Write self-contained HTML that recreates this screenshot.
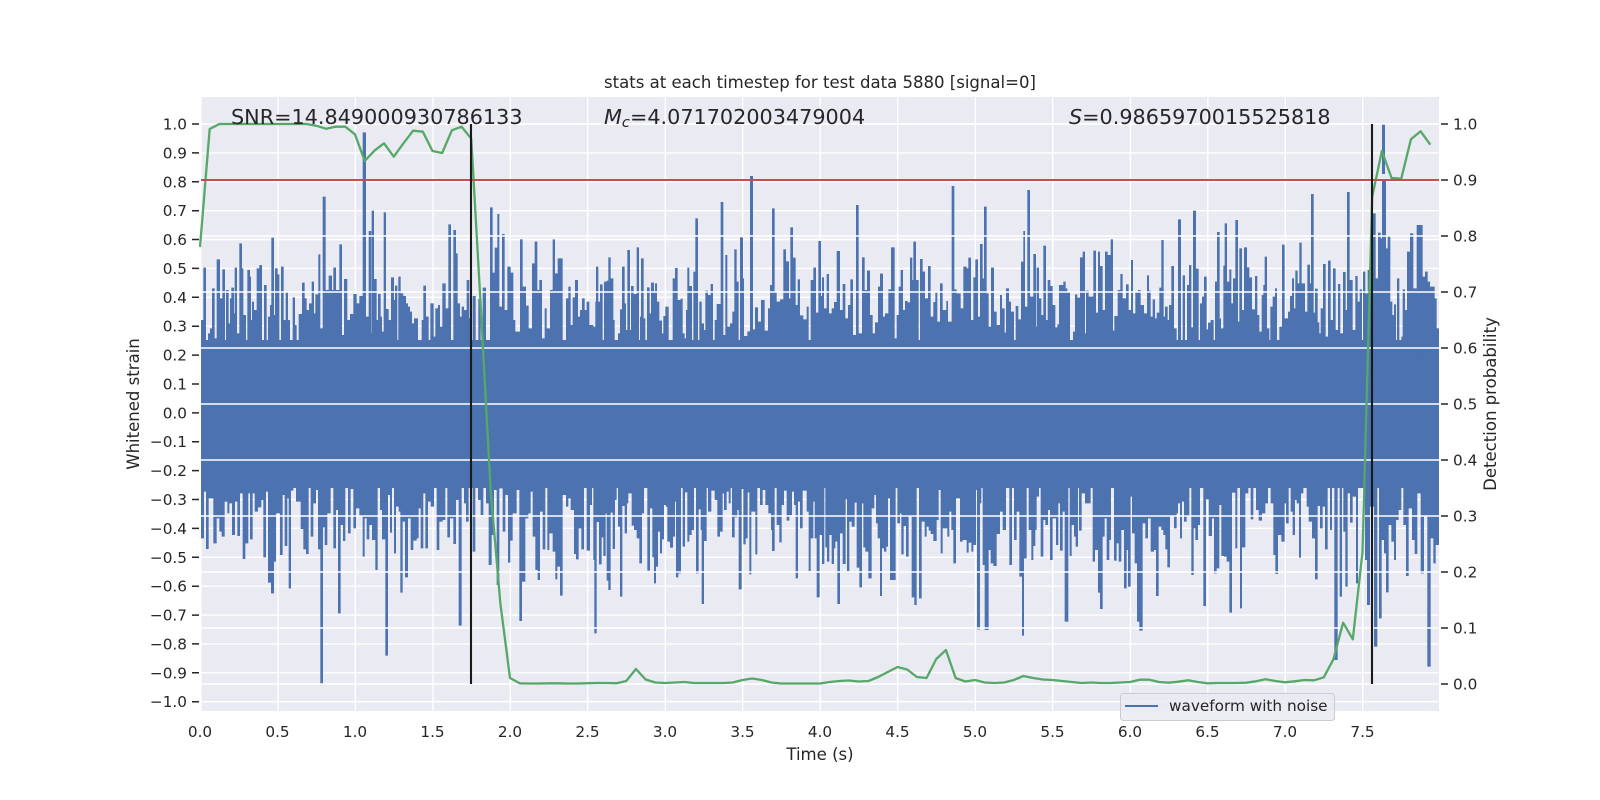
<!DOCTYPE html>
<html><head><meta charset="utf-8"><title>stats</title>
<style>
html,body{margin:0;padding:0;background:#fff}
svg{display:block}
text{font-family:"DejaVu Sans",sans-serif;fill:#262626}
.t{font-size:15.28px}
.l{font-size:16.55px}
.a{font-size:20.75px}
</style></head><body>
<svg width="1600" height="800" viewBox="0 0 1600 800" xmlns="http://www.w3.org/2000/svg">
<defs>
<clipPath id="c"><rect x="201" y="97" width="1238" height="614"/></clipPath>
</defs>
<rect x="201" y="97" width="1238" height="614" fill="#eaeaf2"/>
<!-- grid of the left axis -->
<g clip-path="url(#c)">
<path stroke="#fff" stroke-width="1.4" fill="none" d="M200 124H1440M200 152.9H1440M200 181.8H1440M200 210.7H1440M200 239.5H1440M200 268.4H1440M200 297.3H1440M200 326.2H1440M200 355.1H1440M200 384H1440M200 412.9H1440M200 441.7H1440M200 470.6H1440M200 499.5H1440M200 528.4H1440M200 557.3H1440M200 586.2H1440M200 615.1H1440M200 643.9H1440M200 672.8H1440M200 701.7H1440
M201 96V712M278 96V712M355.3 96V712M433 96V712M510.3 96V712M587.7 96V712M665.2 96V712M742.7 96V712M820.2 96V712M897.7 96V712M975.2 96V712M1052.7 96V712M1130.4 96V712M1207.8 96V712M1285.3 96V712M1362.8 96V712"/>
<!-- waveform -->
<g fill="#4c72b0">
<rect x="201" y="340" width="1238" height="148"/>
<!-- top left -->
<path transform="translate(190 90) scale(.33333)" d="M33 900V690H40V533H48V750H54V730H60V715H66V595H74V745H80V508H90V625H97V538H105V770H108V600H116V700H120V625H124V593H132V670H134V533H141V730H148V460H156V535H160V675H168V810H172V540H180V560H183V690H186V635H192V660H200V535H208V525H216V790H222V585H230V760H234V680H240V645H244V443H252V675H255V535H263V553H268V750H273V530H281V690H287V608H294V690H300V800H308V622H315V705H320V750H326V672H336V578H344V625H350V660H357V640H365V575H372V670H376V613H385V493H391V715H398V320H407V600H416V557H426V600H430V533H438V600H448V463H456V735H462V567H472V690H480V672H490V612H500V640H508V618H518V127H528V680H536V423H544V730H545V362H552V567H560V690H564V612H572V680H576V725H581V367H588V657H596V690H603V562H612V630H615V587H622V810H625V560H632V610H640V618H648V640H654V650H660V665H666V700H672V685H684V775H695V690H700V587H708V680H716V755H721V640H731V740H736V655H744V645H750V710H757V580H767V655H775V403H783V755H790V420H798V490H803V640H810V680H815V650H822V660H830V570H838V685H845V800H848V618H857V755H865V627H872V755H878V593H888V752H900V352H908V548H914V473H922V372H928V650H936V432H944V660H952V530H962V548H970V690H976V725H984V725H990V448H998V590H1008V647H1016V715H1026V520H1034V455H1042V600H1048V570H1056V745H1064V655H1070V715H1080V600H1088V448H1095V550H1103V505H1118V750H1128V625H1135V590H1142V705H1148V622H1155V570H1164V680H1172V900z"/>
<!-- top middle -->
<path transform="translate(580 170) scale(.33333)" d="M0 570V420H6V385H14V420H20V395H28V465H40V470H46V395H48V290H55V395H60V343H68V510H72V335H80V332H85V262H92V325H100V450H104V520H108V510H114V490H120V418H126V290H134V400H138V480H142V240H150V480H153V348H161V372H170V232H177V520H180V440H183V265H191V445H196V550H201V352H209V430H213V338H222V368H225V340H231V395H238V452H246V490H250V438H256V410H266V515H274V510H278V325H285V294H293V390H302V386H308V490H314V505H318V420H322V293H328V348H336V540H340V305H346V145H354V540H358V395H365V460H372V480H376V362H384V375H392V342H399V510H404V450H410V402H422V96H430V495H436V255H442V470H450V460H457V425H463V238H470V335H476V545H480V202H489V325H492V498H502V484H510V18H519V478H525V412H534V455H543V390H554V482H564V415H570V345H576V115H584V365H590V395H600V388H610V238H618V274H627V385H631V172H639V263H647V405H653V328H660V436H670V448H680V410H686V530H692V330H700V293H708V428H715V213H723V378H726V322H732V415H740V312H747V430H755V415H762V396H770V243H780V420H788V342H796V445H804V405H811V328H819V495H828V105H836V490H846V262H854V360H861V302H870V435H878V490H885V457H894V350H900V311H909V440H915V430H925V358H933V232H944V505H950V435H956V350H962V300H969V420H975V393H983V397H990V263H997V330H1000V215H1008V330H1016V530H1020V267H1028V305H1035V385H1044V288H1052V440H1060V396H1066V365H1072V455H1080V340H1088V420H1099V393H1104V455H1115V48H1123V358H1130V370H1142V415H1150V290H1160V295H1165V263H1173V450H1180V322H1186V268H1194V440H1200V222H1208V325H1212V110H1220V370H1226V470H1233V293H1242V425H1250V465H1260V570z"/>
<!-- top right -->
<path transform="translate(1000 170) scale(.33333)" d="M0 570V375H6V415H14V488H18V355H27V395H33V425H42V550H47V408H55V448H63V275H70V183H75V410H82V60H90V380H100V252H108V470H110V293H117V385H124V435H130V227H138V450H143V330H151V348H158V405H166V472H172V463H177V345H190V335H197V355H202V365H210V550H219V485H225V373H232V383H240V262H248V245H255V490H258V362H266V380H280V242H288V428H294V245H300V288H308V420H315V245H323V255H332V208H339V482H343V438H353V360H361V312H368V385H378V343H386V420H393V270H399V430H406V365H414V360H422V405H432V430H441V316H447V362H452V440H458V388H465V445H470V428H478V353H484V210H491V440H495V410H503V450H507V405H514V288H522V475H530V515H534V148H543V525H548V316H555V530H561V345H567V285H574V472H579V122H588V296H596V530H600V400H606V380H612V320H620V478H624V458H632V450H641V530H645V335H651V186H659V445H663V475H670V287H674V160H681V335H688V298H694V400H699V325H706V150H714V455H718V235H726V420H732V232H741V292H748V322H756V418H765V318H772V435H778V485H785V375H790V345H794V260H801V475H808V520H811V410H818V380H825V355H831V515H838V470H846V224H854V445H864V425H870V378H876V325H882V415H886V302H893V340H898V218H905V340H915V425H922V284H930V340H933V72H941V428H945V356H953V457H958V490H962V415H969V282H977V500H984V272H992V450H999V295H1007V480H1014V342H1021V490H1029V306H1037V420H1041V66H1049V330H1058V480H1066V318H1073V395H1079V358H1086V520H1089V305H1096V370H1103V300H1118V130H1127V325H1134V188H1142V205H1146V30H1158V235H1163V196H1171V395H1177V435H1182V403H1188V510H1191V325H1198V560H1204V500H1208V358H1215V420H1221V245H1230V190H1240V355H1250V165H1260V570z"/>
<path transform="translate(1200 90) scale(.33333)" d="M660 900V405H668V560H675V545H683V575H690V590H704V625H710V715H717V900z"/>
<rect x="1382" y="124" width="3" height="50"/>
<!-- bottom left -->
<path transform="translate(190 450) scale(.33333)" d="M33 0V265H42V125H48V297H56V145H70V280H80V205H88V245H95V260H104V155H112V190H118V160H126V255H135V155H142V258H150V130H158V327H166V280H175V130H180V268H188V130H194V185H204V172H214V150H220V322H228V125H234V398H243V430H252V335H258V190H270V315H278V135H284V288H292V145H296V415H303V122H310V95H318V155H332V237H340V298H348V312H356V75H362V260H370V160H378V120H384V298H391V700H399V232H404V285H412V190H422V95H430V295H438V180H444V490H452V225H459V273H466V110H474V250H482V117H490V235H498V175H508V200H518V320H524V205H530V268H538V225H546V270H556V360H563V110H570V180H576V268H586V617H594V135H600V248H606V85H612V310H618V170H626V185H631V428H638V215H645V382H654V205H662V300H670V272H680V265H686V175H692V295H700V130H706V295H714V155H722V170H732V45H740V300H748V215H758V210H766V95H772V262H780V205H790V282H798V150H806V527H815V110H822V160H828V215H836V110H848V305H856V85H864V150H872V195H880V100H888V160H896V345H905V255H912V120H920V405H928V115H938V245H946V135H954V338H961V272H968V190H980V120H988V513H996V395H1006V205H1015V190H1022V125H1028V260H1036V360H1043V390H1050V185H1058V298H1066V85H1072V300H1078V250H1088V305H1096V388H1102V350H1110V437H1118V135H1128V170H1135V145H1142V180H1152V312H1158V328H1166V235H1175V0z"/>
<!-- bottom middle -->
<path transform="translate(580 460) scale(.33333)" d="M0 0V205H4V268H12V75H20V272H30V135H36V30H40V300H43V520H50V186H57V313H65V232H70V288H77V160H80V362H85V390H92V158H98V267H105V120H110V70H114V200H120V410H127V138H134V220H141V130H145V100H155V197H162V210H170V235H178V310H186V160H192V75H196V70H202V332H210V145H217V292H222V370H228V320H234V215H240V280H246V238H252V135H257V140H262V245H270V263H279V230H285V125H288V352H295V340H303V10H308V260H315V97H322V245H328V225H335V210H342V70H348V340H356V148H362V210H365V432H372V243H380V50H384V155H394V92H404V120H412V230H420V215H428V100H432V150H440V95H446V130H452V0H456V232H464V172H472V150H476V388H485V87H490V253H497V235H503V97H508V343H514V155H526V283H532V75H540V135H548V90H556V135H565V160H573V210H576V273H584V80H590V195H598V247H605V135H612V92H620V182H628V165H636V95H642V135H647V355H654V125H660V205H668V92H680V155H686V333H692V235H700V125H704V235H710V412H719V225H726V312H733V30H736V262H741V305H748V225H755V312H762V265H766V245H772V432H780V220H788V312H797V118H801V333H808V185H815V200H824V128H830V323H838V382H846V130H850V262H856V275H865V355H875V145H883V105H888V190H893V235H900V408H906V265H912V275H919V260H924V115H930V360H947V70H952V190H960V160H964V283H971V198H978V290H986V170H995V412H1003V435H1010V80H1017V415H1025V185H1034V230H1040V200H1046V212H1052V222H1060V243H1070V180H1076V90H1082V280H1088V205H1102V230H1108V155H1114V210H1120V310H1128V115H1140V245H1148V240H1160V278H1166V248H1174V275H1180V255H1188V90H1191V508H1200V130H1204V75H1208V315H1214V510H1226V270H1232V310H1240V318H1250V222H1260V0z"/>
<!-- bottom right -->
<path transform="translate(1000 460) scale(.33333)" d="M0 0V155H8V210H18V8H28V315H36V45H42V240H50V155H58V350H66V527H72V295H80V30H86V210H94V300H100V258H106V210H110V110H117V50H122V290H130V180H136V195H144V150H150V300H158V175H168V255H175V130H180V272H188V155H194V485H205V45H209V288H215V195H222V230H227V260H234V5H237V212H245V100H255V130H272V60H278V305H285V270H294V398H300V447H308V230H314V175H320V300H328V240H333V60H342V302H350V250H356V305H364V210H372V385H380V270H384V380H392V110H396V220H404V310H411V485H418V512H428V190H436V235H444V175H452V275H462V270H468V408H476V200H484V210H490V225H496V268H502V322H510V170H522V205H530V160H534V130H540V235H546V125H552V185H560V170H568V75H574V345H581V205H586V240H594V195H600V65H610V438H618V118H626V228H636V175H642V340H650V325H658V135H664V288H672V290H680V305H688V458H696V98H706V265H712V60H720V445H726V262H736V100H745V60H752V178H760V60H768V150H776V182H786V160H796V130H804V75H812V130H820V285H826V342H834V225H844V245H854V130H858V190H866V40H872V155H878V225H885V120H890V130H897V293H903V100H910V55H920V140H926V185H936V235H945V358H953V138H960V205H968V140H975V268H983V30H990V210H996V60H1003V600H1013V30H1019V410H1026V0H1030V215H1036V380H1043V100H1050V188H1058V110H1068V370H1074V65H1082V30H1090V140H1095V300H1101V435H1110V140H1122V560H1132V50H1137V475H1145V240H1152V280H1158V397H1166V195H1174V245H1182V300H1188V180H1196V150H1204V30H1210V195H1218V348H1226V145H1236V240H1244V282H1252V100H1262V340H1272V170H1282V620H1292V235H1300V310H1307V255H1317V0z"/>
</g>
</g>
<!-- grid of the right axis -->
<path stroke="#fff" stroke-width="1.4" fill="none" d="M201 124H1439M201 236H1439M201 292H1439M201 348H1439M201 404H1439M201 460H1439M201 516H1439M201 572H1439M201 628H1439M201 684H1439"/>
<!-- detection line -->
<polyline transform="translate(200 0) scale(9.6875 1)" fill="none" stroke="#55a868" stroke-width="2.3" stroke-linejoin="round" points="0,247 1,129 2,124 3,124 4,124 5,124 6,124 7,124 8,124 9,124 10,124 11,124 12,125.7 13,128.7 14,126.7 15,126.7 16,134.3 17,161 18,150.7 19,143.3 20,156.7 21,143.3 22,130.7 23,131.7 24,151 25,153 26,130.3 27,126.7 28,138.7 29,310 30,490 31,603 32,678 33,683.3 34,683.5 35,683.5 36,683.3 37,683.3 38,683.5 39,683.5 40,683.2 41,683 42,683 43,683.2 44,681 45,669 46,679.5 47,682.5 48,683 49,682.5 50,682 51,683 52,683 53,683 54,683 55,682.5 56,680 57,678.5 58,680 59,682.5 60,683.5 61,683.5 62,683.5 63,683.5 64,683.5 65,682 66,681 67,680.5 68,681.5 69,681 70,677 71,672 72,667 73,669.5 74,677 75,678 76,659 77,650 78,678 79,681.5 80,680 81,682.5 82,683 83,682.5 84,680 85,676 86,678 87,679.5 88,680 89,681 90,682 91,683 92,682.5 93,683 94,683 95,682.5 96,682 97,679.7 98,679.7 99,682 100,682.7 101,681.7 102,680.3 103,682 104,683.3 105,683 106,683 107,683 108,682.7 109,681.3 110,679.3 111,681 112,682.3 113,681.3 114,680 115,680.3 116,677.3 117,659.3 118,622.7 119,639.3 120,552 121,196.7 122,151 123,178 124,178.7 125,139.3 126,131.3 127,144.7" style="vector-effect:non-scaling-stroke"/>
<path stroke="#c44e52" stroke-width="2.1" d="M201 180H1439"/>
<path stroke="#1a1a1a" stroke-width="2.1" d="M471 124V684M1372 124V684"/>
<!-- ticks -->
<path stroke="#262626" stroke-width="1.5" d="M192 124H199M192 152.9H199M192 181.8H199M192 210.7H199M192 239.5H199M192 268.4H199M192 297.3H199M192 326.2H199M192 355.1H199M192 384H199M192 412.9H199M192 441.7H199M192 470.6H199M192 499.5H199M192 528.4H199M192 557.3H199M192 586.2H199M192 615.1H199M192 643.9H199M192 672.8H199M192 701.7H199
M1441 124H1448M1441 180H1448M1441 236H1448M1441 292H1448M1441 348H1448M1441 404H1448M1441 460H1448M1441 516H1448M1441 572H1448M1441 628H1448M1441 684H1448"/>
<!-- left labels -->
<g class="t" text-anchor="end">
<text x="187" y="129.5">1.0</text><text x="187" y="158.4">0.9</text><text x="187" y="187.3">0.8</text><text x="187" y="216.2">0.7</text><text x="187" y="245">0.6</text><text x="187" y="273.9">0.5</text><text x="187" y="302.8">0.4</text><text x="187" y="331.7">0.3</text><text x="187" y="360.6">0.2</text><text x="187" y="389.5">0.1</text><text x="187" y="418.4">0.0</text><text x="187" y="447.2">−0.1</text><text x="187" y="476.1">−0.2</text><text x="187" y="505">−0.3</text><text x="187" y="533.9">−0.4</text><text x="187" y="562.8">−0.5</text><text x="187" y="591.7">−0.6</text><text x="187" y="620.6">−0.7</text><text x="187" y="649.4">−0.8</text><text x="187" y="678.3">−0.9</text><text x="187" y="707.2">−1.0</text>
</g>
<!-- right labels -->
<g class="t">
<text x="1453" y="129.5">1.0</text><text x="1453" y="185.5">0.9</text><text x="1453" y="241.5">0.8</text><text x="1453" y="297.5">0.7</text><text x="1453" y="353.5">0.6</text><text x="1453" y="409.5">0.5</text><text x="1453" y="465.5">0.4</text><text x="1453" y="521.5">0.3</text><text x="1453" y="577.5">0.2</text><text x="1453" y="633.5">0.1</text><text x="1453" y="689.5">0.0</text>
</g>
<!-- x labels -->
<g class="t" text-anchor="middle">
<text x="200" y="737">0.0</text><text x="277.5" y="737">0.5</text><text x="355" y="737">1.0</text><text x="432.5" y="737">1.5</text><text x="510" y="737">2.0</text><text x="587.5" y="737">2.5</text><text x="665" y="737">3.0</text><text x="742.5" y="737">3.5</text><text x="820" y="737">4.0</text><text x="897.5" y="737">4.5</text><text x="975" y="737">5.0</text><text x="1052.5" y="737">5.5</text><text x="1130" y="737">6.0</text><text x="1207.5" y="737">6.5</text><text x="1285" y="737">7.0</text><text x="1362.5" y="737">7.5</text>
</g>
<text class="l" x="820" y="88" text-anchor="middle">stats at each timestep for test data 5880 [signal=0]</text>
<text class="l" x="820" y="760" text-anchor="middle">Time (s)</text>
<text class="l" transform="translate(139 404) rotate(-90)" text-anchor="middle">Whitened strain</text>
<text class="l" transform="translate(1496 404) rotate(-90)" text-anchor="middle">Detection probability</text>
<text class="a" x="231" y="124">SNR=14.849000930786133</text>
<text class="a" x="604" y="124"><tspan font-style="italic">M</tspan><tspan font-style="italic" font-size="14.6" dy="3">c</tspan><tspan dy="-3">=4.071702003479004</tspan></text>
<text class="a" x="1069" y="124"><tspan font-style="italic">S</tspan>=0.9865970015525818</text>
<!-- legend -->
<rect x="1120.5" y="693.5" width="214" height="27" rx="3" fill="#eaeaf2" fill-opacity=".85" stroke="#cccccc" stroke-width="1"/>
<path stroke="#4c72b0" stroke-width="2.1" d="M1125 706H1158"/>
<text class="t" x="1169" y="711">waveform with noise</text>
</svg>
</body></html>
